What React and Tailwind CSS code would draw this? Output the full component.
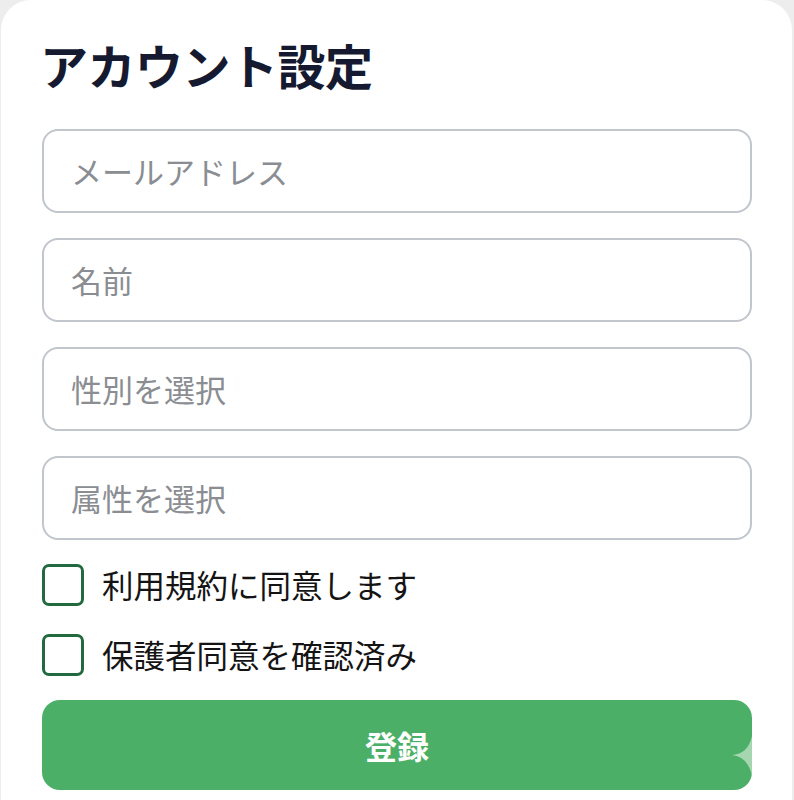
import React from "react";

const font = { fontFamily: '"Noto Sans CJK JP", "Noto Sans", sans-serif' };

function Field({ label }) {
  return (
    <div className="h-[84px] rounded-[16px] border-2 border-[#c1c5cc] flex items-center pl-[27px] text-[31px] text-[#8a8d92] bg-white">
      {label}
    </div>
  );
}

function Check({ label }) {
  return (
    <div className="flex items-center gap-[18px]">
      <div className="w-[42px] h-[42px] rounded-[7px] border-[3px] border-[#22693f] bg-white" />
      <span className="text-[31.5px] text-[#141414] leading-none">{label}</span>
    </div>
  );
}

export default function App() {
  return (
    <div className="w-[794px] h-[800px] bg-[#ededee] overflow-hidden" style={font}>
      <div className="ml-[1px] w-[791px] h-[830px] bg-white rounded-[30px] px-[41px] pt-[40px]">
        <h1 className="text-[48px] font-bold text-[#161a30] leading-none ml-[-2px] tracking-[-0.5px]">アカウント設定</h1>
        <div className="mt-[41px] w-[710px] flex flex-col gap-[25px]">
          <Field label="メールアドレス" />
          <Field label="名前" />
          <Field label="性別を選択" />
          <Field label="属性を選択" />
        </div>
        <div className="mt-[24px] flex flex-col gap-[28px]">
          <Check label="利用規約に同意します" />
          <Check label="保護者同意を確認済み" />
        </div>
        <button className="relative mt-[24px] w-[710px] h-[90px] rounded-[18px] bg-[#4caf67] text-white text-[32px] font-bold flex items-center justify-center">
          登録
          <svg className="absolute right-0 top-[36px]" width="20" height="40" viewBox="0 0 20 40">
            <path d="M20 0 Q16 18 0 19 Q16 21 20 40 Z" fill="#a6d6b0" />
          </svg>
        </button>
      </div>
    </div>
  );
}
